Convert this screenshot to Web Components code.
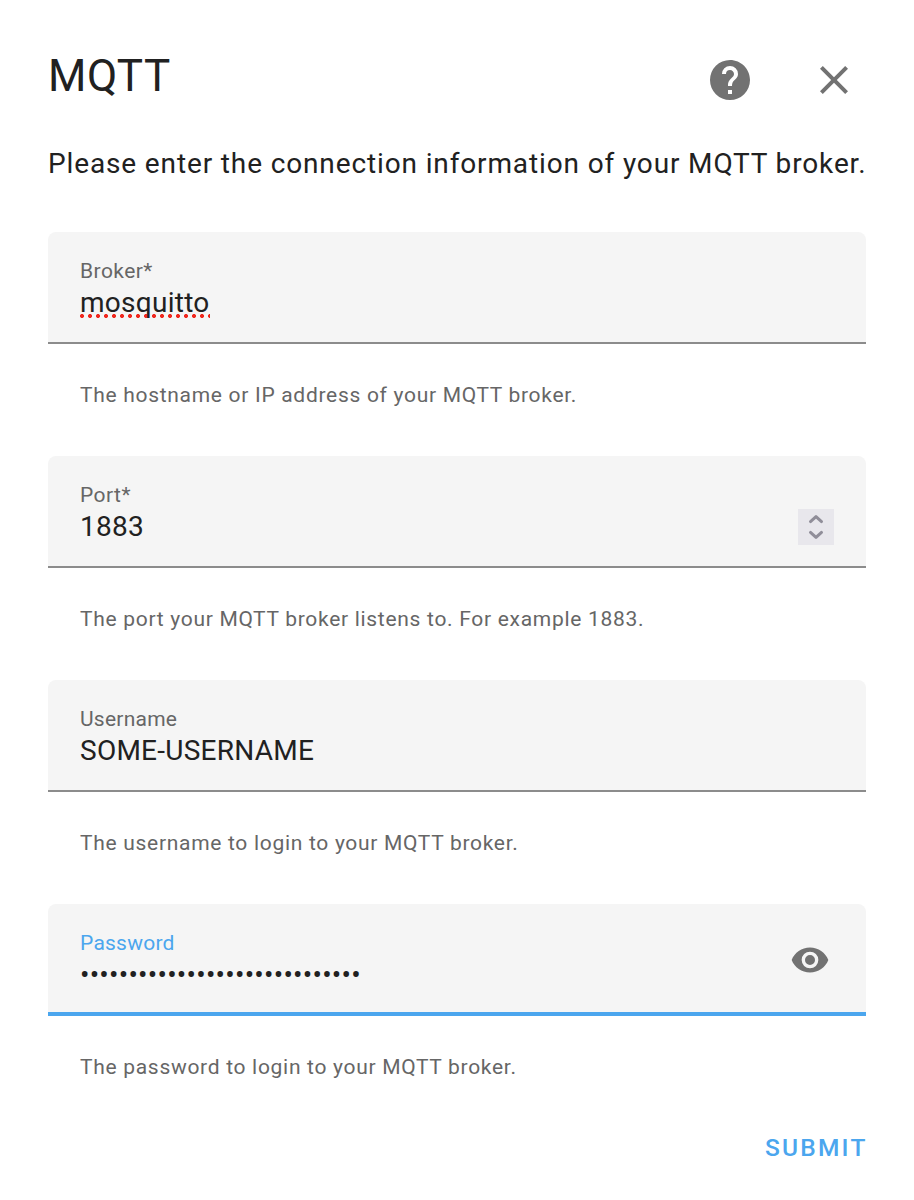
<!DOCTYPE html>
<html lang="en"><head><meta charset="utf-8"><title>MQTT</title>
<style>body{margin:0;background:#fff;font-family:Roboto,sans-serif;color:#212121}</style></head>
<body>
<config-dialog heading="MQTT">
<form-field label="Broker*" value="mosquitto" spell required helper="The hostname or IP address of your MQTT broker."></form-field>
<form-field label="Port*" value="1883" required helper="The port your MQTT broker listens to. For example 1883."><number-stepper slot="trailing"></number-stepper></form-field>
<form-field label="Username" value="SOME-USERNAME" helper="The username to login to your MQTT broker."></form-field>
<form-field label="Password" secret="29" focused helper="The password to login to your MQTT broker."><eye-icon slot="trailing"></eye-icon></form-field>
</config-dialog>
<script>
class Base extends HTMLElement{
  connectedCallback(){ if(!this.shadowRoot) this.attachShadow({mode:'open'}).innerHTML=this.render(); }
}
customElements.define('config-dialog',class extends Base{render(){return `
<style>
:host{display:block;box-sizing:border-box;height:1200px;padding:48px 48px 0;overflow:hidden}
header{display:flex;align-items:flex-start;height:96px}
h1{margin:0;flex:1;font-weight:400;font-size:44px;line-height:56px;letter-spacing:.55px}
.actions{display:flex;gap:56px;padding:8px 8px 0 0}
svg{display:block;width:48px;height:48px;fill:#727272}
p{margin:0;font-size:28px;line-height:40px;letter-spacing:.868px;white-space:nowrap}
.fields{display:flex;flex-direction:column;margin-top:48px}
footer{display:flex;justify-content:flex-end;margin-top:4px}
button{all:unset;font-size:24.5px;font-weight:500;line-height:32px;letter-spacing:2.19px;margin-right:-1.5px;color:#4ba6ee}
</style>
<header><h1>${this.getAttribute('heading')}</h1><div class="actions">
<svg viewBox="0 0 24 24"><path d="M15.07,11.25L14.17,12.17C13.45,12.89 13,13.5 13,15H11V14.5C11,13.39 11.45,12.39 12.17,11.67L13.41,10.41C13.78,10.05 14,9.55 14,9C14,7.89 13.1,7 12,7A2,2 0 0,0 10,9H8A4,4 0 0,1 12,5A4,4 0 0,1 16,9C16,9.88 15.64,10.67 15.07,11.25M13,19H11V17H13M12,2A10,10 0 0,0 2,12A10,10 0 0,0 12,22A10,10 0 0,0 22,12C22,6.47 17.5,2 12,2Z"/></svg>
<svg viewBox="0 0 24 24"><path d="M19,6.41L17.59,5L12,10.59L6.41,5L5,6.41L10.59,12L5,17.59L6.41,19L12,13.41L17.59,19L19,17.59L13.41,12L19,6.41Z"/></svg>
</div></header>
<p>Please enter the connection information of your MQTT broker.</p>
<div class="fields"><slot></slot></div>
<footer><button>SUBMIT</button></footer>`}});
customElements.define('form-field',class extends Base{render(){
const n=+this.getAttribute('secret');
const value=n?`<div class="value secret">${'•'.repeat(n)}</div>`:`<div class="value"><span>${this.getAttribute('value')}</span></div>`;
return `
<style>
:host{display:block;height:224px}
.box{box-sizing:border-box;display:flex;height:112px;padding:0 32px;background:#f5f5f5;border-radius:8px 8px 0 0;border-bottom:2px solid #8c8c8c}
:host([focused]) .box{border-bottom:4px solid #4ba6ee}
.text{flex:1;padding-top:26px}
.label{font-size:21px;line-height:26px;letter-spacing:.24px;color:#666}
:host([required]) .label{letter-spacing:.45px}
:host([focused]) .label{color:#4ba6ee}
.value{font-size:28px;line-height:36px;letter-spacing:.2625px;padding-top:1px}
.value span{display:inline-block;height:36px}
:host([spell]) span{margin-right:-1px;background:radial-gradient(circle at 2px 2px,#f0281e 1.7px,transparent 2.3px) 0 29px/8px 4px repeat-x}
.secret{letter-spacing:.24px}
.helper{padding:37px 32px 0;font-size:21px;line-height:28px;letter-spacing:.7px;color:#666}
</style>
<div class="box"><div class="text"><div class="label">${this.getAttribute('label')}</div>${value}</div><slot name="trailing"></slot></div>
<div class="helper">${this.getAttribute('helper')}</div>`}});
customElements.define('number-stepper',class extends Base{render(){return `
<style>:host{display:block;width:36px;height:36px;margin-top:53px;background:#e8e7ec}svg{display:block}</style>
<svg width="36" height="36" fill="none" stroke="#908e99" stroke-width="3" stroke-linecap="round" stroke-linejoin="round"><path d="M12.5 12.6L18 7.6L23.5 12.6M12.5 23.4L18 28.4L23.5 23.4"/></svg>`}});
customElements.define('eye-icon',class extends Base{render(){return `
<style>:host{display:block;margin:36px 4px 0 0}svg{display:block;width:40px;height:40px;fill:#727272}</style>
<svg viewBox="0 0 24 24"><path d="M12,9A3,3 0 0,0 9,12A3,3 0 0,0 12,15A3,3 0 0,0 15,12A3,3 0 0,0 12,9M12,17A5,5 0 0,1 7,12A5,5 0 0,1 12,7A5,5 0 0,1 17,12A5,5 0 0,1 12,17M12,4.5C7,4.5 2.73,7.61 1,12C2.73,16.39 7,19.5 12,19.5C17,19.5 21.27,16.39 23,12C21.27,7.61 17,4.5 12,4.5Z"/></svg>`}});
</script></body></html>
